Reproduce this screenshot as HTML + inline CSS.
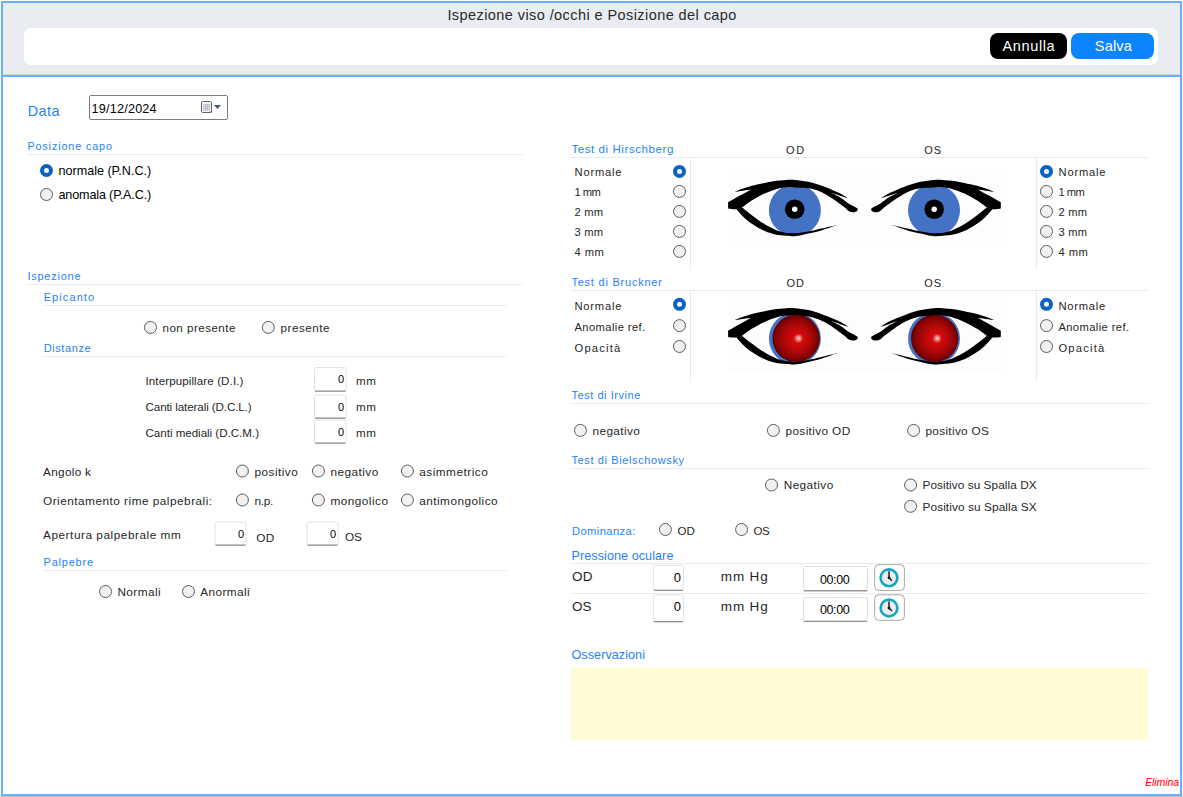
<!DOCTYPE html>
<html><head><meta charset="utf-8"><style>
html,body{margin:0;padding:0;background:#fff;overflow:hidden}
svg{display:block;font-family:"Liberation Sans",sans-serif}
</style></head><body>
<svg width="1183" height="797" viewBox="0 0 1183 797">
<rect x="0" y="0" width="1183" height="797" fill="#fff"/>
<rect x="3" y="3" width="1177" height="72" fill="#e9edf1"/>
<rect x="3" y="74" width="1177" height="1" fill="#d5d3d0"/>
<rect x="3" y="75" width="1177" height="2" fill="#66b0ff"/>
<rect x="1" y="1" width="1181" height="2" fill="#66b0ff"/>
<rect x="1" y="1" width="2" height="795" fill="#66b0ff"/>
<rect x="1180" y="1" width="2" height="795" fill="#66b0ff"/>
<rect x="1" y="794" width="1181" height="2" fill="#66b0ff"/>
<rect x="0" y="796" width="1183" height="1" fill="#b8c4c4"/>
<text x="447.4" y="20" font-size="14.5" fill="#2a2a2a" textLength="289" lengthAdjust="spacing">Ispezione viso /occhi e Posizione del capo</text>
<rect x="24" y="28" width="1134" height="37" fill="#fff" rx="7"/>
<rect x="990" y="33" width="77" height="26" fill="#000" rx="8"/>
<rect x="1071" y="33" width="83" height="26" fill="#0a84ff" rx="8"/>
<text x="1002.5" y="51" font-size="14.5" fill="#fff" textLength="52.2" lengthAdjust="spacing">Annulla</text>
<text x="1094.8" y="51" font-size="14.5" fill="#fff" textLength="37" lengthAdjust="spacing">Salva</text>
<text x="27.8" y="115.7" font-size="14.4" fill="#1f82fb" textLength="31.6" lengthAdjust="spacing">Data</text>
<rect x="89.5" y="95.5" width="138" height="24" rx="1.5" fill="#fff" stroke="#7a7a7a"/>
<text x="91.6" y="112.7" font-size="12.6" fill="#000" textLength="65" lengthAdjust="spacing">19/12/2024</text>
<rect x="201.5" y="101.5" width="10" height="11" rx="1.2" fill="#f4f7fc" stroke="#6e6260" stroke-width="1"/>
<rect x="203.3" y="104" width="6.6" height="6.7" fill="#b9bec8"/>
<rect x="204.0" y="105.0" width="1" height="1" fill="#eef0f4"/>
<rect x="204.0" y="107.0" width="1" height="1" fill="#eef0f4"/>
<rect x="204.0" y="109.0" width="1" height="1" fill="#eef0f4"/>
<rect x="206.0" y="105.0" width="1" height="1" fill="#eef0f4"/>
<rect x="206.0" y="107.0" width="1" height="1" fill="#eef0f4"/>
<rect x="206.0" y="109.0" width="1" height="1" fill="#eef0f4"/>
<rect x="208.0" y="105.0" width="1" height="1" fill="#eef0f4"/>
<rect x="208.0" y="107.0" width="1" height="1" fill="#eef0f4"/>
<rect x="208.0" y="109.0" width="1" height="1" fill="#eef0f4"/>
<path d="M209.5 112.5l2.5-2.5v2.5z" fill="#6e6260"/>
<path d="M214 105h7l-3.5 4z" fill="#3f5686"/>
<text x="27.4" y="149.6" font-size="10.8" fill="#1f82fb" textLength="84.6" lengthAdjust="spacing">Posizione capo</text>
<rect x="27" y="154" width="495" height="1" fill="#e4ebf3"/>
<circle cx="46.5" cy="170.5" r="4.5" fill="#fff" stroke="#0863c4" stroke-width="4"/>
<text x="58.5" y="174.9" font-size="12.6" fill="#000" textLength="92.7" lengthAdjust="spacing">normale (P.N.C.)</text>
<circle cx="46.5" cy="194.5" r="6" fill="#f1f1f1" stroke="#5c5c5c" stroke-width="1"/>
<text x="58.5" y="198.6" font-size="12.6" fill="#000" textLength="92.7" lengthAdjust="spacing">anomala (P.A.C.)</text>
<text x="27.4" y="279.9" font-size="11" fill="#1f82fb" textLength="53.2" lengthAdjust="spacing">Ispezione</text>
<rect x="27" y="284" width="495" height="1" fill="#e4ebf3"/>
<text x="43.7" y="300.8" font-size="11" fill="#1f82fb" textLength="50.4" lengthAdjust="spacing">Epicanto</text>
<rect x="43" y="305" width="463" height="1" fill="#e4ebf3"/>
<circle cx="150.5" cy="327.4" r="6" fill="#f1f1f1" stroke="#5c5c5c" stroke-width="1"/>
<text x="162.5" y="332.3" font-size="11.6" fill="#262626" textLength="72.9" lengthAdjust="spacing">non presente</text>
<circle cx="268.3" cy="327.4" r="6" fill="#f1f1f1" stroke="#5c5c5c" stroke-width="1"/>
<text x="280.6" y="332.3" font-size="11.6" fill="#262626" textLength="48.8" lengthAdjust="spacing">presente</text>
<text x="43.7" y="351.6" font-size="11" fill="#1f82fb" textLength="46.9" lengthAdjust="spacing">Distanze</text>
<rect x="43" y="356" width="463" height="1" fill="#e4ebf3"/>
<rect x="314.5" y="367.5" width="31.5" height="24" rx="2" fill="#fff" stroke="#e2e2e2"/>
<rect x="315" y="390.5" width="30.5" height="1.2" fill="#8a8a8a"/>
<text x="344.0" y="383.46" font-size="11" fill="#000" text-anchor="end">0</text>
<text x="145.5" y="384.7" font-size="11.6" fill="#262626" textLength="97.9" lengthAdjust="spacing">Interpupillare (D.I.)</text>
<text x="356" y="384.7" font-size="11.6" fill="#262626" textLength="20" lengthAdjust="spacing">mm</text>
<rect x="314.5" y="395.0" width="31.5" height="23.5" rx="2" fill="#fff" stroke="#e2e2e2"/>
<rect x="315" y="417.5" width="30.5" height="1.2" fill="#8a8a8a"/>
<text x="344.0" y="410.71" font-size="11" fill="#000" text-anchor="end">0</text>
<text x="145.5" y="411.4" font-size="11.6" fill="#262626" textLength="106.2" lengthAdjust="spacing">Canti laterali (D.C.L.)</text>
<text x="356" y="411.4" font-size="11.6" fill="#262626" textLength="20" lengthAdjust="spacing">mm</text>
<rect x="314.5" y="420.0" width="31.5" height="23.5" rx="2" fill="#fff" stroke="#e2e2e2"/>
<rect x="315" y="442.5" width="30.5" height="1.2" fill="#8a8a8a"/>
<text x="344.0" y="435.71" font-size="11" fill="#000" text-anchor="end">0</text>
<text x="145.5" y="436.5" font-size="11.6" fill="#262626" textLength="113.5" lengthAdjust="spacing">Canti mediali (D.C.M.)</text>
<text x="356" y="436.5" font-size="11.6" fill="#262626" textLength="20" lengthAdjust="spacing">mm</text>
<text x="43" y="476.1" font-size="11.8" fill="#262626" textLength="48" lengthAdjust="spacing">Angolo k</text>
<circle cx="242.4" cy="471" r="6" fill="#f1f1f1" stroke="#5c5c5c" stroke-width="1"/>
<text x="254.4" y="475.8" font-size="11.8" fill="#262626" textLength="43.4" lengthAdjust="spacing">positivo</text>
<circle cx="318.4" cy="471" r="6" fill="#f1f1f1" stroke="#5c5c5c" stroke-width="1"/>
<text x="330.4" y="475.8" font-size="11.8" fill="#262626" textLength="47.8" lengthAdjust="spacing">negativo</text>
<circle cx="407.4" cy="471" r="6" fill="#f1f1f1" stroke="#5c5c5c" stroke-width="1"/>
<text x="419.2" y="475.8" font-size="11.8" fill="#262626" textLength="68.6" lengthAdjust="spacing">asimmetrico</text>
<text x="43" y="505.3" font-size="11.8" fill="#262626" textLength="169.1" lengthAdjust="spacing">Orientamento rime palpebrali:</text>
<circle cx="242.4" cy="500" r="6" fill="#f1f1f1" stroke="#5c5c5c" stroke-width="1"/>
<text x="254.4" y="505" font-size="11.8" fill="#262626" textLength="18.9" lengthAdjust="spacing">n.p.</text>
<circle cx="318.4" cy="500" r="6" fill="#f1f1f1" stroke="#5c5c5c" stroke-width="1"/>
<text x="330.4" y="505" font-size="11.8" fill="#262626" textLength="57.6" lengthAdjust="spacing">mongolico</text>
<circle cx="407.4" cy="500" r="6" fill="#f1f1f1" stroke="#5c5c5c" stroke-width="1"/>
<text x="419.2" y="505" font-size="11.8" fill="#262626" textLength="78.4" lengthAdjust="spacing">antimongolico</text>
<text x="43" y="539.1" font-size="11.8" fill="#262626" textLength="137.8" lengthAdjust="spacing">Apertura palpebrale mm</text>
<rect x="215.0" y="522.0" width="31.0" height="23.5" rx="2" fill="#fff" stroke="#e2e2e2"/>
<rect x="215.5" y="544.5" width="30.0" height="1.2" fill="#8a8a8a"/>
<text x="244.0" y="538.4" font-size="11" fill="#000" text-anchor="end">0</text>
<text x="256.3" y="541.5" font-size="11.8" fill="#262626" textLength="17.9" lengthAdjust="spacing">OD</text>
<rect x="307.0" y="522.0" width="31.0" height="23.5" rx="2" fill="#fff" stroke="#e2e2e2"/>
<rect x="307.5" y="544.5" width="30.0" height="1.2" fill="#8a8a8a"/>
<text x="336.0" y="538.4" font-size="11" fill="#000" text-anchor="end">0</text>
<text x="345.1" y="541.3" font-size="11.8" fill="#262626" textLength="16.7" lengthAdjust="spacing">OS</text>
<text x="43.5" y="566.3" font-size="11" fill="#1f82fb" textLength="49.6" lengthAdjust="spacing">Palpebre</text>
<rect x="43" y="570" width="463" height="1" fill="#e4ebf3"/>
<circle cx="105.5" cy="591.5" r="6" fill="#f1f1f1" stroke="#5c5c5c" stroke-width="1"/>
<text x="117.4" y="596" font-size="11.8" fill="#262626" textLength="43.3" lengthAdjust="spacing">Normali</text>
<circle cx="188.5" cy="591.5" r="6" fill="#f1f1f1" stroke="#5c5c5c" stroke-width="1"/>
<text x="200.3" y="596" font-size="11.8" fill="#262626" textLength="49.2" lengthAdjust="spacing">Anormali</text>
<text x="571.4" y="153.2" font-size="11.5" fill="#1f82fb" textLength="101.9" lengthAdjust="spacing">Test di Hirschberg</text>
<text x="786.1" y="154" font-size="11" fill="#262626" textLength="18.1" lengthAdjust="spacing">OD</text>
<text x="924.2" y="154" font-size="11" fill="#262626" textLength="16.9" lengthAdjust="spacing">OS</text>
<rect x="571" y="157" width="577" height="1" fill="#e4ebf3"/>
<rect x="690" y="158" width="1" height="112" fill="#e4ebf3"/>
<rect x="1036" y="158" width="1" height="112" fill="#e4ebf3"/>
<circle cx="679.5" cy="171.4" r="4.5" fill="#fff" stroke="#0863c4" stroke-width="4"/>
<text x="574.6" y="176.1" font-size="11.2" fill="#262626" textLength="46.8" lengthAdjust="spacing">Normale</text>
<circle cx="1046.5" cy="171.4" r="4.5" fill="#fff" stroke="#0863c4" stroke-width="4"/>
<text x="1058.6" y="176.1" font-size="11.2" fill="#262626" textLength="46.8" lengthAdjust="spacing">Normale</text>
<circle cx="679.5" cy="191.4" r="6" fill="#f1f1f1" stroke="#5c5c5c" stroke-width="1"/>
<text x="574.6" y="196.1" font-size="11.2" fill="#262626" textLength="26.3" lengthAdjust="spacing">1 mm</text>
<circle cx="1046.5" cy="191.4" r="6" fill="#f1f1f1" stroke="#5c5c5c" stroke-width="1"/>
<text x="1058.6" y="196.1" font-size="11.2" fill="#262626" textLength="26.3" lengthAdjust="spacing">1 mm</text>
<circle cx="679.5" cy="211.4" r="6" fill="#f1f1f1" stroke="#5c5c5c" stroke-width="1"/>
<text x="574.6" y="216.1" font-size="11.2" fill="#262626" textLength="28.4" lengthAdjust="spacing">2 mm</text>
<circle cx="1046.5" cy="211.4" r="6" fill="#f1f1f1" stroke="#5c5c5c" stroke-width="1"/>
<text x="1058.6" y="216.1" font-size="11.2" fill="#262626" textLength="28.4" lengthAdjust="spacing">2 mm</text>
<circle cx="679.5" cy="231.4" r="6" fill="#f1f1f1" stroke="#5c5c5c" stroke-width="1"/>
<text x="574.6" y="236.1" font-size="11.2" fill="#262626" textLength="28.4" lengthAdjust="spacing">3 mm</text>
<circle cx="1046.5" cy="231.4" r="6" fill="#f1f1f1" stroke="#5c5c5c" stroke-width="1"/>
<text x="1058.6" y="236.1" font-size="11.2" fill="#262626" textLength="28.4" lengthAdjust="spacing">3 mm</text>
<circle cx="679.5" cy="251.4" r="6" fill="#f1f1f1" stroke="#5c5c5c" stroke-width="1"/>
<text x="574.6" y="256.1" font-size="11.2" fill="#262626" textLength="29.2" lengthAdjust="spacing">4 mm</text>
<circle cx="1046.5" cy="251.4" r="6" fill="#f1f1f1" stroke="#5c5c5c" stroke-width="1"/>
<text x="1058.6" y="256.1" font-size="11.2" fill="#262626" textLength="29.2" lengthAdjust="spacing">4 mm</text>
<defs>
<radialGradient id="redg0" cx="0.5" cy="0.5" r="0.5" fx="0.56" fy="0.5"><stop offset="0" stop-color="#ffe0d8"/><stop offset="0.07" stop-color="#f59090"/><stop offset="0.2" stop-color="#d80a0a"/><stop offset="0.55" stop-color="#b00808"/><stop offset="0.85" stop-color="#880303"/><stop offset="1" stop-color="#5a0000"/></radialGradient>
<radialGradient id="redg1" cx="0.5" cy="0.5" r="0.5" fx="0.44" fy="0.5"><stop offset="0" stop-color="#ffe0d8"/><stop offset="0.07" stop-color="#f59090"/><stop offset="0.2" stop-color="#d80a0a"/><stop offset="0.55" stop-color="#b00808"/><stop offset="0.85" stop-color="#880303"/><stop offset="1" stop-color="#5a0000"/></radialGradient>
</defs>
<rect x="728" y="174" width="273" height="68" fill="#fdfdfd"/><g><circle cx="794.9" cy="210.2" r="26" fill="#4472c4"/><circle cx="794.7" cy="209.3" r="9.8" fill="#000"/><circle cx="794.7" cy="209.3" r="2.7" fill="#fff"/><g transform="translate(0 0)"><path d="M728.10 202.30C730.08 201.18 736.13 197.75 740.00 195.60C743.87 193.45 749.42 190.43 751.30 189.40C748.53 189.80 737.47 191.40 734.70 191.80C736.08 191.25 740.28 189.47 743.00 188.50C745.72 187.53 748.43 186.70 751.00 186.00C753.57 185.30 754.68 185.10 758.40 184.30C762.12 183.50 768.62 181.93 773.30 181.20C777.98 180.47 782.88 180.12 786.50 179.90C790.12 179.68 791.38 179.60 795.00 179.90C798.62 180.20 803.82 180.75 808.20 181.70C812.58 182.65 817.20 184.17 821.30 185.60C825.40 187.03 829.57 188.93 832.80 190.30C836.03 191.67 838.08 192.42 840.70 193.80C843.32 195.18 847.20 197.80 848.50 198.60C847.00 198.10 842.33 196.57 839.50 195.60C836.67 194.63 832.83 193.27 831.50 192.80C833.03 193.63 838.00 196.10 840.70 197.80C843.40 199.50 845.57 201.60 847.70 203.00C849.83 204.40 851.87 205.30 853.50 206.20C855.13 207.10 856.92 207.60 857.50 208.40C858.08 209.20 857.67 210.35 857.00 211.00C856.33 211.65 854.83 212.25 853.50 212.30C852.17 212.35 850.55 212.17 849.00 211.30C847.45 210.43 846.62 208.97 844.20 207.10C841.78 205.23 837.87 202.37 834.50 200.10C831.13 197.83 827.65 195.33 824.00 193.50C820.35 191.67 815.97 190.05 812.60 189.10C809.23 188.15 806.73 188.08 803.80 187.80C800.87 187.52 797.88 187.50 795.00 187.40C792.12 187.30 789.38 186.98 786.50 187.20C783.62 187.42 781.37 187.63 777.70 188.70C774.03 189.77 768.90 191.58 764.50 193.60C760.10 195.62 755.03 198.47 751.30 200.80C747.57 203.13 743.63 206.47 742.10 207.60C741.15 207.88 738.73 209.13 736.40 209.30C734.07 209.47 729.48 208.72 728.10 208.60C728.10 207.55 728.10 203.35 728.10 202.30Z" fill="#000"/><path d="M736.40 209.30C738.08 211.05 742.57 216.55 746.50 219.80C750.43 223.05 755.53 226.43 760.00 228.80C764.47 231.17 768.88 232.83 773.30 234.00C777.72 235.17 782.88 235.47 786.50 235.80C790.12 236.13 791.38 236.37 795.00 236.00C798.62 235.63 803.82 234.53 808.20 233.60C812.58 232.67 816.40 231.88 821.30 230.40C826.20 228.92 834.88 225.65 837.60 224.70C834.88 225.35 826.20 227.45 821.30 228.60C816.40 229.75 812.58 230.83 808.20 231.60C803.82 232.37 799.53 233.17 795.00 233.20C790.47 233.23 786.03 233.30 781.00 231.80C775.97 230.30 769.67 226.97 764.80 224.20C759.93 221.43 755.58 217.97 751.80 215.20C748.02 212.43 743.72 208.87 742.10 207.60C741.15 207.88 737.35 209.02 736.40 209.30Z" fill="#000"/></g></g><g transform="translate(1728.9 0) scale(-1 1)"><circle cx="794.9" cy="210.2" r="26" fill="#4472c4"/><circle cx="794.7" cy="209.3" r="9.8" fill="#000"/><circle cx="794.7" cy="209.3" r="2.7" fill="#fff"/><g transform="translate(0 0)"><path d="M728.10 202.30C730.08 201.18 736.13 197.75 740.00 195.60C743.87 193.45 749.42 190.43 751.30 189.40C748.53 189.80 737.47 191.40 734.70 191.80C736.08 191.25 740.28 189.47 743.00 188.50C745.72 187.53 748.43 186.70 751.00 186.00C753.57 185.30 754.68 185.10 758.40 184.30C762.12 183.50 768.62 181.93 773.30 181.20C777.98 180.47 782.88 180.12 786.50 179.90C790.12 179.68 791.38 179.60 795.00 179.90C798.62 180.20 803.82 180.75 808.20 181.70C812.58 182.65 817.20 184.17 821.30 185.60C825.40 187.03 829.57 188.93 832.80 190.30C836.03 191.67 838.08 192.42 840.70 193.80C843.32 195.18 847.20 197.80 848.50 198.60C847.00 198.10 842.33 196.57 839.50 195.60C836.67 194.63 832.83 193.27 831.50 192.80C833.03 193.63 838.00 196.10 840.70 197.80C843.40 199.50 845.57 201.60 847.70 203.00C849.83 204.40 851.87 205.30 853.50 206.20C855.13 207.10 856.92 207.60 857.50 208.40C858.08 209.20 857.67 210.35 857.00 211.00C856.33 211.65 854.83 212.25 853.50 212.30C852.17 212.35 850.55 212.17 849.00 211.30C847.45 210.43 846.62 208.97 844.20 207.10C841.78 205.23 837.87 202.37 834.50 200.10C831.13 197.83 827.65 195.33 824.00 193.50C820.35 191.67 815.97 190.05 812.60 189.10C809.23 188.15 806.73 188.08 803.80 187.80C800.87 187.52 797.88 187.50 795.00 187.40C792.12 187.30 789.38 186.98 786.50 187.20C783.62 187.42 781.37 187.63 777.70 188.70C774.03 189.77 768.90 191.58 764.50 193.60C760.10 195.62 755.03 198.47 751.30 200.80C747.57 203.13 743.63 206.47 742.10 207.60C741.15 207.88 738.73 209.13 736.40 209.30C734.07 209.47 729.48 208.72 728.10 208.60C728.10 207.55 728.10 203.35 728.10 202.30Z" fill="#000"/><path d="M736.40 209.30C738.08 211.05 742.57 216.55 746.50 219.80C750.43 223.05 755.53 226.43 760.00 228.80C764.47 231.17 768.88 232.83 773.30 234.00C777.72 235.17 782.88 235.47 786.50 235.80C790.12 236.13 791.38 236.37 795.00 236.00C798.62 235.63 803.82 234.53 808.20 233.60C812.58 232.67 816.40 231.88 821.30 230.40C826.20 228.92 834.88 225.65 837.60 224.70C834.88 225.35 826.20 227.45 821.30 228.60C816.40 229.75 812.58 230.83 808.20 231.60C803.82 232.37 799.53 233.17 795.00 233.20C790.47 233.23 786.03 233.30 781.00 231.80C775.97 230.30 769.67 226.97 764.80 224.20C759.93 221.43 755.58 217.97 751.80 215.20C748.02 212.43 743.72 208.87 742.10 207.60C741.15 207.88 737.35 209.02 736.40 209.30Z" fill="#000"/></g></g>
<text x="571.4" y="285.9" font-size="11" fill="#1f82fb" textLength="90.5" lengthAdjust="spacing">Test di Bruckner</text>
<text x="786.4" y="287.4" font-size="11" fill="#262626" textLength="17.5" lengthAdjust="spacing">OD</text>
<text x="924.2" y="287.4" font-size="11" fill="#262626" textLength="16.9" lengthAdjust="spacing">OS</text>
<rect x="571" y="290" width="577" height="1" fill="#e4ebf3"/>
<rect x="690" y="291" width="1" height="91" fill="#e4ebf3"/>
<rect x="1036" y="291" width="1" height="91" fill="#e4ebf3"/>
<circle cx="679.5" cy="304.3" r="4.5" fill="#fff" stroke="#0863c4" stroke-width="4"/>
<text x="574.5" y="309.9" font-size="11.2" fill="#262626" textLength="46.9" lengthAdjust="spacing">Normale</text>
<circle cx="1046.5" cy="304.3" r="4.5" fill="#fff" stroke="#0863c4" stroke-width="4"/>
<text x="1058.4" y="309.9" font-size="11.2" fill="#262626" textLength="46.9" lengthAdjust="spacing">Normale</text>
<circle cx="679.5" cy="325.6" r="6" fill="#f1f1f1" stroke="#5c5c5c" stroke-width="1"/>
<text x="574.5" y="330.9" font-size="11.2" fill="#262626" textLength="70.6" lengthAdjust="spacing">Anomalie ref.</text>
<circle cx="1046.5" cy="325.6" r="6" fill="#f1f1f1" stroke="#5c5c5c" stroke-width="1"/>
<text x="1058.4" y="330.9" font-size="11.2" fill="#262626" textLength="70.6" lengthAdjust="spacing">Anomalie ref.</text>
<circle cx="679.5" cy="346.5" r="6" fill="#f1f1f1" stroke="#5c5c5c" stroke-width="1"/>
<text x="574.5" y="351.7" font-size="11.2" fill="#262626" textLength="45.8" lengthAdjust="spacing">Opacità</text>
<circle cx="1046.5" cy="346.5" r="6" fill="#f1f1f1" stroke="#5c5c5c" stroke-width="1"/>
<text x="1058.4" y="351.7" font-size="11.2" fill="#262626" textLength="45.8" lengthAdjust="spacing">Opacità</text>
<rect x="728" y="303" width="273" height="68" fill="#fdfdfd"/><g><circle cx="794.9" cy="338.5" r="26" fill="#4472c4"/><g transform="translate(0 128.3)"><path d="M728.10 202.30C730.08 201.18 736.13 197.75 740.00 195.60C743.87 193.45 749.42 190.43 751.30 189.40C748.53 189.80 737.47 191.40 734.70 191.80C736.08 191.25 740.28 189.47 743.00 188.50C745.72 187.53 748.43 186.70 751.00 186.00C753.57 185.30 754.68 185.10 758.40 184.30C762.12 183.50 768.62 181.93 773.30 181.20C777.98 180.47 782.88 180.12 786.50 179.90C790.12 179.68 791.38 179.60 795.00 179.90C798.62 180.20 803.82 180.75 808.20 181.70C812.58 182.65 817.20 184.17 821.30 185.60C825.40 187.03 829.57 188.93 832.80 190.30C836.03 191.67 838.08 192.42 840.70 193.80C843.32 195.18 847.20 197.80 848.50 198.60C847.00 198.10 842.33 196.57 839.50 195.60C836.67 194.63 832.83 193.27 831.50 192.80C833.03 193.63 838.00 196.10 840.70 197.80C843.40 199.50 845.57 201.60 847.70 203.00C849.83 204.40 851.87 205.30 853.50 206.20C855.13 207.10 856.92 207.60 857.50 208.40C858.08 209.20 857.67 210.35 857.00 211.00C856.33 211.65 854.83 212.25 853.50 212.30C852.17 212.35 850.55 212.17 849.00 211.30C847.45 210.43 846.62 208.97 844.20 207.10C841.78 205.23 837.87 202.37 834.50 200.10C831.13 197.83 827.65 195.33 824.00 193.50C820.35 191.67 815.97 190.05 812.60 189.10C809.23 188.15 806.73 188.08 803.80 187.80C800.87 187.52 797.88 187.50 795.00 187.40C792.12 187.30 789.38 186.98 786.50 187.20C783.62 187.42 781.37 187.63 777.70 188.70C774.03 189.77 768.90 191.58 764.50 193.60C760.10 195.62 755.03 198.47 751.30 200.80C747.57 203.13 743.63 206.47 742.10 207.60C741.15 207.88 738.73 209.13 736.40 209.30C734.07 209.47 729.48 208.72 728.10 208.60C728.10 207.55 728.10 203.35 728.10 202.30Z" fill="#000"/><path d="M736.40 209.30C738.08 211.05 742.57 216.55 746.50 219.80C750.43 223.05 755.53 226.43 760.00 228.80C764.47 231.17 768.88 232.83 773.30 234.00C777.72 235.17 782.88 235.47 786.50 235.80C790.12 236.13 791.38 236.37 795.00 236.00C798.62 235.63 803.82 234.53 808.20 233.60C812.58 232.67 816.40 231.88 821.30 230.40C826.20 228.92 834.88 225.65 837.60 224.70C834.88 225.35 826.20 227.45 821.30 228.60C816.40 229.75 812.58 230.83 808.20 231.60C803.82 232.37 799.53 233.17 795.00 233.20C790.47 233.23 786.03 233.30 781.00 231.80C775.97 230.30 769.67 226.97 764.80 224.20C759.93 221.43 755.58 217.97 751.80 215.20C748.02 212.43 743.72 208.87 742.10 207.60C741.15 207.88 737.35 209.02 736.40 209.30Z" fill="#000"/></g><circle cx="796.1" cy="338.4" r="23.7" fill="url(#redg0)"/></g><g transform="translate(1728.9 0) scale(-1 1)"><circle cx="794.9" cy="338.5" r="26" fill="#4472c4"/><g transform="translate(0 128.3)"><path d="M728.10 202.30C730.08 201.18 736.13 197.75 740.00 195.60C743.87 193.45 749.42 190.43 751.30 189.40C748.53 189.80 737.47 191.40 734.70 191.80C736.08 191.25 740.28 189.47 743.00 188.50C745.72 187.53 748.43 186.70 751.00 186.00C753.57 185.30 754.68 185.10 758.40 184.30C762.12 183.50 768.62 181.93 773.30 181.20C777.98 180.47 782.88 180.12 786.50 179.90C790.12 179.68 791.38 179.60 795.00 179.90C798.62 180.20 803.82 180.75 808.20 181.70C812.58 182.65 817.20 184.17 821.30 185.60C825.40 187.03 829.57 188.93 832.80 190.30C836.03 191.67 838.08 192.42 840.70 193.80C843.32 195.18 847.20 197.80 848.50 198.60C847.00 198.10 842.33 196.57 839.50 195.60C836.67 194.63 832.83 193.27 831.50 192.80C833.03 193.63 838.00 196.10 840.70 197.80C843.40 199.50 845.57 201.60 847.70 203.00C849.83 204.40 851.87 205.30 853.50 206.20C855.13 207.10 856.92 207.60 857.50 208.40C858.08 209.20 857.67 210.35 857.00 211.00C856.33 211.65 854.83 212.25 853.50 212.30C852.17 212.35 850.55 212.17 849.00 211.30C847.45 210.43 846.62 208.97 844.20 207.10C841.78 205.23 837.87 202.37 834.50 200.10C831.13 197.83 827.65 195.33 824.00 193.50C820.35 191.67 815.97 190.05 812.60 189.10C809.23 188.15 806.73 188.08 803.80 187.80C800.87 187.52 797.88 187.50 795.00 187.40C792.12 187.30 789.38 186.98 786.50 187.20C783.62 187.42 781.37 187.63 777.70 188.70C774.03 189.77 768.90 191.58 764.50 193.60C760.10 195.62 755.03 198.47 751.30 200.80C747.57 203.13 743.63 206.47 742.10 207.60C741.15 207.88 738.73 209.13 736.40 209.30C734.07 209.47 729.48 208.72 728.10 208.60C728.10 207.55 728.10 203.35 728.10 202.30Z" fill="#000"/><path d="M736.40 209.30C738.08 211.05 742.57 216.55 746.50 219.80C750.43 223.05 755.53 226.43 760.00 228.80C764.47 231.17 768.88 232.83 773.30 234.00C777.72 235.17 782.88 235.47 786.50 235.80C790.12 236.13 791.38 236.37 795.00 236.00C798.62 235.63 803.82 234.53 808.20 233.60C812.58 232.67 816.40 231.88 821.30 230.40C826.20 228.92 834.88 225.65 837.60 224.70C834.88 225.35 826.20 227.45 821.30 228.60C816.40 229.75 812.58 230.83 808.20 231.60C803.82 232.37 799.53 233.17 795.00 233.20C790.47 233.23 786.03 233.30 781.00 231.80C775.97 230.30 769.67 226.97 764.80 224.20C759.93 221.43 755.58 217.97 751.80 215.20C748.02 212.43 743.72 208.87 742.10 207.60C741.15 207.88 737.35 209.02 736.40 209.30Z" fill="#000"/></g><circle cx="794.2" cy="338.4" r="23.7" fill="url(#redg1)"/></g>
<text x="571.5" y="399" font-size="11" fill="#1f82fb" textLength="68.8" lengthAdjust="spacing">Test di Irvine</text>
<rect x="571" y="403" width="577" height="1" fill="#e4ebf3"/>
<circle cx="580.4" cy="430.4" r="6" fill="#f1f1f1" stroke="#5c5c5c" stroke-width="1"/>
<text x="592.5" y="434.8" font-size="11.8" fill="#262626" textLength="47.3" lengthAdjust="spacing">negativo</text>
<circle cx="773.4" cy="430.4" r="6" fill="#f1f1f1" stroke="#5c5c5c" stroke-width="1"/>
<text x="785.5" y="435.1" font-size="11.8" fill="#262626" textLength="64.7" lengthAdjust="spacing">positivo OD</text>
<circle cx="913.6" cy="430.4" r="6" fill="#f1f1f1" stroke="#5c5c5c" stroke-width="1"/>
<text x="925.5" y="435.1" font-size="11.8" fill="#262626" textLength="63.4" lengthAdjust="spacing">positivo OS</text>
<text x="571.5" y="464" font-size="11" fill="#1f82fb" textLength="112.5" lengthAdjust="spacing">Test di Bielschowsky</text>
<rect x="571" y="468" width="577" height="1" fill="#e4ebf3"/>
<circle cx="771.5" cy="485" r="6" fill="#f1f1f1" stroke="#5c5c5c" stroke-width="1"/>
<text x="783.7" y="489.4" font-size="11.8" fill="#262626" textLength="49.5" lengthAdjust="spacing">Negativo</text>
<circle cx="910.6" cy="485" r="6" fill="#f1f1f1" stroke="#5c5c5c" stroke-width="1"/>
<text x="922.5" y="489.4" font-size="11.8" fill="#262626" textLength="114.1" lengthAdjust="spacing">Positivo su Spalla DX</text>
<circle cx="910.6" cy="506.3" r="6" fill="#f1f1f1" stroke="#5c5c5c" stroke-width="1"/>
<text x="922.5" y="510.8" font-size="11.8" fill="#262626" textLength="114.1" lengthAdjust="spacing">Positivo su Spalla SX</text>
<text x="572" y="535.1" font-size="11.2" fill="#1f82fb" textLength="63.3" lengthAdjust="spacing">Dominanza:</text>
<circle cx="665.4" cy="529.5" r="6" fill="#f1f1f1" stroke="#5c5c5c" stroke-width="1"/>
<text x="677.5" y="534.5" font-size="11.5" fill="#262626" textLength="17.3" lengthAdjust="spacing">OD</text>
<circle cx="741.6" cy="529.5" r="6" fill="#f1f1f1" stroke="#5c5c5c" stroke-width="1"/>
<text x="753.4" y="534.5" font-size="11.5" fill="#262626" textLength="16.2" lengthAdjust="spacing">OS</text>
<text x="571.5" y="560" font-size="12.6" fill="#1f82fb" textLength="101.9" lengthAdjust="spacing">Pressione oculare</text>
<rect x="571" y="563" width="577" height="1" fill="#e4ebf3"/>
<rect x="571" y="593" width="577" height="1" fill="#e4ebf3"/>
<text x="572" y="581" font-size="13.5" fill="#262626" textLength="20.5" lengthAdjust="spacing">OD</text>
<rect x="653.3" y="565.3" width="30.200000000000045" height="25.40000000000009" rx="2" fill="#fff" stroke="#e2e2e2"/>
<rect x="653.8" y="589.7" width="29.200000000000045" height="1.2" fill="#8a8a8a"/>
<text x="681" y="581.5" font-size="13" fill="#000" text-anchor="end">0</text>
<text x="720.8" y="581" font-size="13.5" fill="#262626" textLength="46.9" lengthAdjust="spacing">mm Hg</text>
<rect x="803.5" y="566.5" width="64" height="24.600000000000023" rx="1" fill="#fff" stroke="#dedede"/>
<rect x="804" y="590.1" width="63" height="1.2" fill="#8a8a8a"/>
<text x="834.8" y="583.6" font-size="12.5" fill="#000" textLength="29.7" lengthAdjust="spacing" text-anchor="middle">00:00</text>
<rect x="874.7" y="564.7" width="29.699999999999932" height="25.699999999999932" rx="4" fill="#fff" stroke="#a8a8a8"/>
<circle cx="889" cy="577.8" r="8.4" fill="#ececec" stroke="#17a6bd" stroke-width="2.6"/>
<path d="M889 577.8V571.3M889 577.8l3 3" stroke="#222" stroke-width="1.5" fill="none"/>
<circle cx="889" cy="577.8" r="1.4" fill="#111"/>
<text x="572" y="610.8" font-size="13.5" fill="#262626" textLength="19.4" lengthAdjust="spacing">OS</text>
<rect x="653.3" y="595.1" width="30.200000000000045" height="26.899999999999977" rx="2" fill="#fff" stroke="#e2e2e2"/>
<rect x="653.8" y="621.0" width="29.200000000000045" height="1.2" fill="#8a8a8a"/>
<text x="681" y="611.3" font-size="13" fill="#000" text-anchor="end">0</text>
<text x="720.8" y="610.8" font-size="13.5" fill="#262626" textLength="46.9" lengthAdjust="spacing">mm Hg</text>
<rect x="803.5" y="597.7" width="64" height="24.0" rx="1" fill="#fff" stroke="#dedede"/>
<rect x="804" y="620.7" width="63" height="1.2" fill="#8a8a8a"/>
<text x="834.8" y="613.6" font-size="12.5" fill="#000" textLength="29.7" lengthAdjust="spacing" text-anchor="middle">00:00</text>
<rect x="874.7" y="594.8" width="29.699999999999932" height="25.5" rx="4" fill="#fff" stroke="#a8a8a8"/>
<circle cx="889" cy="608" r="8.4" fill="#ececec" stroke="#17a6bd" stroke-width="2.6"/>
<path d="M889 608V601.5M889 608l3 3" stroke="#222" stroke-width="1.5" fill="none"/>
<circle cx="889" cy="608" r="1.4" fill="#111"/>
<text x="571.5" y="659.2" font-size="12.6" fill="#1f82fb" textLength="73.5" lengthAdjust="spacing">Osservazioni</text>
<rect x="571" y="668" width="577" height="72" fill="#fdfad4"/>
<text x="1145.2" y="785.9" font-size="10.5" fill="#ff0000" textLength="33.8" lengthAdjust="spacing" font-style="italic">Elimina</text>
</svg>
</body></html>
